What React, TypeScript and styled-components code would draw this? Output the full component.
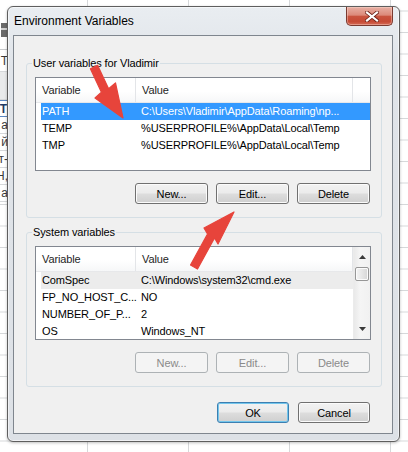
import React from "react";
import styled, { createGlobalStyle, css } from "styled-components";

const GlobalStyle = createGlobalStyle`
  html,
  body {
    margin: 0;
    padding: 0;
  }
  body {
    width: 408px;
    height: 452px;
    overflow: hidden;
    background: #fff;
    font-family: "Segoe UI", "Liberation Sans", Arial, sans-serif;
  }
  * {
    box-sizing: border-box;
  }
`;

const gridLine = "#d6d8da";

const Sheet = styled.div`
  position: relative;
  width: 408px;
  height: 452px;
  overflow: hidden;
  display: flex;
  background-color: #fff;
  background-image: linear-gradient(to right, ${gridLine} 1px, transparent 1px),
    linear-gradient(to bottom, ${gridLine} 1px, transparent 1px);
  background-size: 101px 100%, 100% 21.5px;
  background-position: 87px 0, 0 10.5px;
`;

const SheetColumn = styled.div`
  width: 22px;
  margin-left: -12px;
  align-self: flex-start;
  display: flex;
  flex-direction: column;
  background: #fff;
  font-size: 12px;
  color: #3a3a3a;
`;

type CellVariant = "header" | "active" | "icon";

const SheetCell = styled.div<{ $h: number; $variant?: CellVariant }>`
  display: flex;
  justify-content: flex-end;
  align-items: center;
  height: ${({ $h }) => $h}px;
  padding-right: 2px;
  border-bottom: 1px solid ${gridLine};
  white-space: nowrap;
  ${({ $variant }) =>
    $variant === "header" &&
    css`
      background: #e9eaeb;
    `}
  ${({ $variant }) =>
    $variant === "active" &&
    css`
      border: 1px solid #5b86c0;
      color: #1f3a63;
      font-weight: bold;
    `}
  ${({ $variant }) =>
    $variant === "icon" &&
    css`
      align-items: flex-start;
      padding-top: 23px;
      border-bottom: 1px solid #c9cbcd;
    `}
`;

const SheetIcon = styled.span`
  display: block;
  width: 7px;
  height: 14px;
  background: linear-gradient(#6a6a6a 0 5px, #d0d0d0 5px 7px, #6a6a6a 7px);
`;

/* ---------- window ---------- */

const Window = styled.div`
  position: absolute;
  left: 7px;
  top: 6px;
  width: 393px;
  height: 436px;
  display: flex;
  flex-direction: column;
  padding: 0 6px 7px 5px;
  border: 1px solid #5e5e5e;
  border-radius: 6px;
  background: linear-gradient(#e9edf1, #e0e4e9 60px, #dde1e6);
  box-shadow: inset 0 0 0 1px rgba(255, 255, 255, 0.55),
    0 1px 3px rgba(0, 0, 0, 0.25);
`;

const TitleBar = styled.div`
  display: flex;
  justify-content: space-between;
  align-items: flex-start;
  height: 28px;
  flex: none;
`;

const Title = styled.span`
  padding-left: 1px;
  line-height: 28px;
  font-size: 12px;
  color: #000;
`;

const CloseButton = styled.div`
  display: flex;
  justify-content: center;
  align-items: center;
  width: 47px;
  height: 19px;
  padding-left: 4px;
  border: 1px solid #7a3a30;
  border-top: none;
  border-radius: 0 0 5px 5px;
  background: linear-gradient(
    #e8b0a4 0%,
    #dc8a7a 45%,
    #c9543f 52%,
    #c64a35 80%,
    #d46a55 100%
  );
  box-shadow: inset 0 0 0 1px rgba(255, 225, 215, 0.4);
`;

const Client = styled.div`
  flex: 1;
  display: flex;
  flex-direction: column;
  padding: 0 10px 10px 12px;
  border: 1px solid #7f868e;
  background: #f0f0f0;
  font-size: 11px;
  letter-spacing: -0.12px;
  color: #000;
`;

const Group = styled.div<{ $first?: boolean }>`
  position: relative;
  display: flex;
  flex-direction: column;
  gap: 12px;
  margin-top: ${({ $first }) => ($first ? 27 : 14)}px;
  padding: 13px 10px 13px 8px;
  border: 1px solid #d5dfe5;
  border-radius: 3px;
`;

const Legend = styled.span`
  position: absolute;
  top: -8px;
  left: 5px;
  padding: 0 1px;
  line-height: 15px;
  background: #f0f0f0;
`;

const ListView = styled.div`
  display: flex;
  height: 94px;
  flex: none;
  border: 1px solid #828790;
  background: #fff;
  overflow: hidden;
`;

const ListBody = styled.div`
  flex: 1;
  min-width: 0;
  display: flex;
  flex-direction: column;
`;

const HeaderRow = styled.div`
  display: grid;
  grid-template-columns: 100px 217px 1fr;
  height: 25px;
  flex: none;
  background: linear-gradient(#ffffff, #ffffff 55%, #f6f7f8);
  border-bottom: 1px solid #e7e8ea;
`;

const HeaderCell = styled.div`
  padding-left: 6px;
  line-height: 24px;
  color: #1e1e1e;
  border-right: 1px solid #e3e5e8;
  &:last-child {
    border-right: none;
  }
`;

type RowState = "selected" | "inactive";

const Row = styled.div<{ $state?: RowState }>`
  display: grid;
  grid-template-columns: 94px 217px;
  height: 17px;
  flex: none;
  margin-left: 5px;
  line-height: 17px;
  white-space: nowrap;
  ${({ $state }) =>
    $state === "selected" &&
    css`
      background: #3399ff;
      color: #fff;
    `}
  ${({ $state }) =>
    $state === "inactive" &&
    css`
      background: #ececec;
    `}
  span {
    padding-left: 1px;
    &:nth-child(2) {
      padding-left: 6px;
    }
  }
`;

const ScrollBar = styled.div`
  width: 17px;
  flex: none;
  display: flex;
  flex-direction: column;
  align-items: center;
  border-left: 1px solid #ebebeb;
  background: linear-gradient(to right, #e9e9e9, #f5f5f5 40%, #f1f1f1);
`;

const ScrollArrow = styled.div`
  display: flex;
  justify-content: center;
  align-items: center;
  width: 100%;
  height: 20px;
  flex: none;
`;

const ScrollThumb = styled.div`
  width: 14px;
  height: 14px;
  flex: none;
  border: 1px solid #979797;
  border-radius: 2px;
  background: linear-gradient(to right, #f4f4f4, #e6e6e6 50%, #d6d6d6);
  box-shadow: inset 0 0 0 1px #fbfbfb;
`;

const ScrollTrack = styled.div`
  flex: 1;
`;

const ButtonRow = styled.div<{ $spacing?: number }>`
  display: flex;
  justify-content: flex-end;
  gap: ${({ $spacing }) => $spacing ?? 8}px;
  padding-right: 1px;
`;

const DialogButtons = styled(ButtonRow)`
  margin-top: 15px;
  padding-right: 12px;
`;

const Button = styled.button<{ $default?: boolean; $width?: number }>`
  width: ${({ $width }) => $width ?? 73}px;
  height: 21px;
  padding: 0;
  border: 1px solid #707070;
  border-radius: 3px;
  background: linear-gradient(#f2f2f2 0%, #ebebeb 48%, #dddddd 52%, #cfcfcf 100%);
  box-shadow: inset 0 0 0 1px #fbfbfb;
  font-family: inherit;
  font-size: 11px;
  letter-spacing: inherit;
  color: #000;
  ${({ $default }) =>
    $default &&
    css`
      border-color: #3c7fb1;
      box-shadow: inset 0 0 0 1px #73c6ec;
    `}
  &:disabled {
    border-color: #adb2b5;
    background: #f4f4f4;
    box-shadow: none;
    color: #8a8a8a;
  }
`;

const Overlay = styled.svg`
  position: absolute;
  left: 0;
  top: 0;
  pointer-events: none;
`;

type Variable = { name: string; value: string; state?: RowState };

const userVars: Variable[] = [
  {
    name: "PATH",
    value: "C:\\Users\\Vladimir\\AppData\\Roaming\\np...",
    state: "selected",
  },
  { name: "TEMP", value: "%USERPROFILE%\\AppData\\Local\\Temp" },
  { name: "TMP", value: "%USERPROFILE%\\AppData\\Local\\Temp" },
];

const systemVars: Variable[] = [
  { name: "ComSpec", value: "C:\\Windows\\system32\\cmd.exe", state: "inactive" },
  { name: "FP_NO_HOST_C...", value: "NO" },
  { name: "NUMBER_OF_P...", value: "2" },
  { name: "OS", value: "Windows_NT" },
];

const sheetCells: { h: number; text?: string; variant?: CellVariant }[] = [
  { h: 50, variant: "icon" },
  { h: 22, text: "Т" },
  { h: 28, variant: "header" },
  { h: 17, text: "Т", variant: "active" },
  { h: 17, text: "а" },
  { h: 17, text: "й" },
  { h: 17, text: "т-" },
  { h: 17, text: "Н," },
  { h: 17, text: "а" },
];

function Triangle({ down }: { down?: boolean }) {
  return (
    <svg width="7" height="4" viewBox="0 0 7 4">
      <polygon
        points={down ? "0,0 7,0 3.5,4" : "0,4 7,4 3.5,0"}
        fill="#3a3a3a"
      />
    </svg>
  );
}

function VariableList({ rows, scroll }: { rows: Variable[]; scroll?: boolean }) {
  return (
    <ListView>
      <ListBody>
        <HeaderRow>
          <HeaderCell>Variable</HeaderCell>
          <HeaderCell>Value</HeaderCell>
          <HeaderCell />
        </HeaderRow>
        {rows.map((row) => (
          <Row key={row.name} $state={row.state}>
            <span>{row.name}</span>
            <span>{row.value}</span>
          </Row>
        ))}
      </ListBody>
      {scroll && (
        <ScrollBar>
          <ScrollArrow>
            <Triangle />
          </ScrollArrow>
          <ScrollThumb />
          <ScrollTrack />
          <ScrollArrow>
            <Triangle down />
          </ScrollArrow>
        </ScrollBar>
      )}
    </ListView>
  );
}

function ActionButtons({ disabled }: { disabled?: boolean }) {
  return (
    <ButtonRow>
      <Button disabled={disabled}>New...</Button>
      <Button disabled={disabled}>Edit...</Button>
      <Button disabled={disabled}>Delete</Button>
    </ButtonRow>
  );
}

export default function App() {
  return (
    <>
      <GlobalStyle />
      <Sheet>
        <SheetColumn>
          {sheetCells.map((cell, i) => (
            <SheetCell key={i} $h={cell.h} $variant={cell.variant}>
              {cell.variant === "icon" ? <SheetIcon /> : cell.text}
            </SheetCell>
          ))}
        </SheetColumn>

        <Window>
          <TitleBar>
            <Title>Environment Variables</Title>
            <CloseButton>
              <svg width="14" height="11" viewBox="0 0 14 11">
                <path
                  d="M2 1.5 L12 9.5 M12 1.5 L2 9.5"
                  stroke="#6b2017"
                  strokeWidth="3.8"
                  strokeLinecap="square"
                />
                <path
                  d="M2 1.5 L12 9.5 M12 1.5 L2 9.5"
                  stroke="#ffffff"
                  strokeWidth="2.2"
                  strokeLinecap="square"
                />
              </svg>
            </CloseButton>
          </TitleBar>

          <Client>
            <Group $first>
              <Legend>User variables for Vladimir</Legend>
              <VariableList rows={userVars} />
              <ActionButtons />
            </Group>

            <Group>
              <Legend>System variables</Legend>
              <VariableList rows={systemVars} scroll />
              <ActionButtons disabled />
            </Group>

            <DialogButtons $spacing={9}>
              <Button $default $width={72}>
                OK
              </Button>
              <Button $width={72}>Cancel</Button>
            </DialogButtons>
          </Client>
        </Window>

        <Overlay width="408" height="452" viewBox="0 0 408 452">
          <polygon
            points="90.4,68.7 97.6,65.3 108.6,88.8 115.5,83 123,118 95,98 101.4,92.2"
            fill="#e7443b"
            stroke="#e7443b"
            strokeWidth="1.2"
            strokeLinejoin="round"
          />
          <polygon
            points="190.5,265 207.5,234 204,228 234,212 218,244 214.5,238 197.5,269"
            fill="#e7443b"
            stroke="#e7443b"
            strokeWidth="1.2"
            strokeLinejoin="round"
          />
        </Overlay>
      </Sheet>
    </>
  );
}
